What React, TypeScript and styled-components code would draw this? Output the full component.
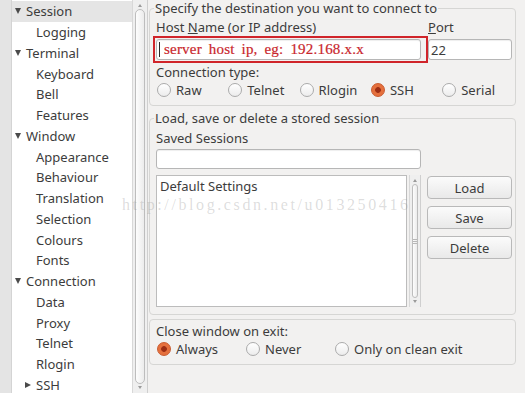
import styled, { createGlobalStyle } from "styled-components";

const GlobalStyle = createGlobalStyle`
    html, body {
        margin: 0;
        padding: 0;
        width: 525px;
        height: 393px;
        overflow: hidden;
        background: #f2f1f0;
        font-family: "Noto Sans", "Open Sans", sans-serif;
        font-size: 13px;
        color: #3c3c3c;
    }
    * { box-sizing: border-box; }
`;

const Window = styled.div`
    position: relative;
    display: flex;
    width: 525px;
    height: 393px;
    overflow: hidden;
`;

const Sidebar = styled.div`
    display: flex;
    width: 148px;
    flex-shrink: 0;
`;

const Strip = styled.div`
    width: 12px;
    background: #e4e4e4;
    border-right: 1px solid #d4d4d4;
`;

const Tree = styled.div`
    width: 120px;
    background: #ffffff;
    padding-top: 1px;
`;

const Row = styled.div<{ $level: number; $selected?: boolean }>`
    display: flex;
    align-items: center;
    height: 20.75px;
    padding-left: ${(p) => p.$level * 10 + 3}px;
    background: ${(p) => (p.$selected ? "#e5e5e5" : "transparent")};
    white-space: nowrap;
`;

const Expander = styled.span`
    width: 11px;
    display: flex;
    align-items: center;
`;

const Triangle = styled.span<{ $open: boolean }>`
    width: 0;
    height: 0;
    ${(p) =>
        p.$open
            ? `border-left: 3.5px solid transparent;
               border-right: 3.5px solid transparent;
               border-top: 6px solid #4a4a4a;`
            : `border-top: 3.5px solid transparent;
               border-bottom: 3.5px solid transparent;
               border-left: 6px solid #4a4a4a;`}
`;

const ScrollTrack = styled.div<{ $height?: number }>`
    display: flex;
    flex-direction: column;
    align-items: center;
    background: #efefef;
    border-left: 1px solid #d8d8d8;
    border-right: 1px solid #cfcfcf;
    width: ${(p) => (p.$height ? 12 : 16)}px;
    ${(p) => (p.$height ? `height: ${p.$height}px;` : "")}
`;

const Arrow = styled.span<{ $up: boolean }>`
    margin: ${(p) => (p.$up ? "4px 0 2px" : "2px 0 4px")};
    width: 0;
    height: 0;
    border-left: 2.5px solid transparent;
    border-right: 2.5px solid transparent;
    ${(p) => (p.$up ? "border-bottom: 3px solid #9a9a9a;" : "border-top: 3px solid #9a9a9a;")}
`;

const Thumb = styled.div`
    flex: 1;
    width: calc(100% - 4px);
    border: 1px solid #bdbdbd;
    border-radius: 5px;
    background: linear-gradient(to right, #fdfdfd, #ececec);
    display: flex;
    align-items: center;
    justify-content: center;
`;

const Grip = styled.span`
    width: 4px;
    height: 5px;
    border-top: 1px solid #b8b8b8;
    border-bottom: 1px solid #b8b8b8;
    position: relative;
    &::after {
        content: "";
        position: absolute;
        left: 0;
        right: 0;
        top: 1px;
        border-top: 1px solid #b8b8b8;
    }
`;

const Main = styled.div`
    flex: 1;
    padding: 0 9px 0 1px;
    display: flex;
    flex-direction: column;
    gap: 4px;
`;

const Group = styled.fieldset`
    margin: 0;
    min-width: 0;
    border: 1px solid #d6d6d4;
    border-radius: 4px;
    padding: 3px 3px 7px 6px;
`;

const Legend = styled.legend`
    padding: 0 1px;
    margin-left: -2px;
    line-height: 16px;
`;

const Label = styled.div<{ $gap?: number }>`
    line-height: 16px;
    white-space: nowrap;
    margin-top: ${(p) => p.$gap ?? 0}px;
`;

const HostGrid = styled.div`
    display: grid;
    grid-template-columns: 265px 84px;
    column-gap: 7px;
    row-gap: 4px;
`;

const Field = styled.div<{ $height: number }>`
    position: relative;
    height: ${(p) => p.$height}px;
    background: #ffffff;
    border: 1px solid #b6b6b6;
    border-radius: 3px;
    box-shadow: inset 0 1px 1px rgba(0, 0, 0, 0.07);
    display: flex;
    align-items: center;
    padding-left: 2px;
    white-space: nowrap;
`;

const Highlight = styled.span`
    position: absolute;
    inset: -4px -8px -4px -4px;
    border: 2px solid #d0242a;
    pointer-events: none;
`;

const Caret = styled.span`
    width: 1px;
    height: 15px;
    background: #2a2a2a;
    margin-right: 4px;
`;

const HintText = styled.span`
    font-family: "Liberation Serif", serif;
    font-size: 15px;
    color: #c9262c;
    word-spacing: 3px;
    letter-spacing: 0.2px;
    -webkit-text-stroke: 0.2px #c9262c;
`;

const RadioRow = styled.div<{ $cols: number; $col: number }>`
    display: grid;
    grid-template-columns: repeat(${(p) => p.$cols}, ${(p) => p.$col}px);
    margin-top: 2px;
`;

const RadioItem = styled.label<{ $span?: number }>`
    display: flex;
    align-items: center;
    gap: 5px;
    height: 16px;
    padding-left: 1px;
    white-space: nowrap;
    ${(p) => (p.$span ? `grid-column: span ${p.$span};` : "")}
`;

const RadioDot = styled.span<{ $checked?: boolean }>`
    width: 14px;
    height: 14px;
    border-radius: 50%;
    flex-shrink: 0;
    ${(p) =>
        p.$checked
            ? `background: radial-gradient(circle, #9c2e14 0 2.5px, #e5703d 3.2px);
               border: 1px solid #c95a2e;`
            : `background: linear-gradient(#ffffff, #ececec);
               border: 1px solid #ababab;`}
`;

const SessionGrid = styled.div`
    display: grid;
    grid-template-columns: 265px 85px;
    column-gap: 6px;
    margin-top: 3px;
`;

const ListArea = styled.div`
    display: flex;
    gap: 2px;
    margin-top: 6px;
`;

const ListBox = styled.div`
    flex: 1;
    height: 132px;
    background: #ffffff;
    border: 1px solid #bcbcbc;
    padding: 2px 3px;
    line-height: 16px;
`;

const Buttons = styled.div`
    display: flex;
    flex-direction: column;
    gap: 7px;
    margin-top: 7px;
`;

const Button = styled.button`
    height: 23px;
    border: 1px solid #b9b9b9;
    border-radius: 4px;
    background: linear-gradient(#fbfbfb, #e9e9e9);
    font-family: "Noto Sans", "Open Sans", sans-serif;
    font-size: 13px;
    color: #3c3c3c;
    padding: 0;
`;

const Watermark = styled.div`
    position: absolute;
    left: 122px;
    top: 196px;
    font-family: "Liberation Serif", serif;
    font-size: 16px;
    letter-spacing: 2.6px;
    color: rgba(150, 150, 150, 0.33);
    pointer-events: none;
    white-space: nowrap;
`;

type Node = { label: string; level: number; expander?: "open" | "closed"; selected?: boolean };

const nodes: Node[] = [
    { label: "Session", level: 0, expander: "open", selected: true },
    { label: "Logging", level: 1 },
    { label: "Terminal", level: 0, expander: "open" },
    { label: "Keyboard", level: 1 },
    { label: "Bell", level: 1 },
    { label: "Features", level: 1 },
    { label: "Window", level: 0, expander: "open" },
    { label: "Appearance", level: 1 },
    { label: "Behaviour", level: 1 },
    { label: "Translation", level: 1 },
    { label: "Selection", level: 1 },
    { label: "Colours", level: 1 },
    { label: "Fonts", level: 1 },
    { label: "Connection", level: 0, expander: "open" },
    { label: "Data", level: 1 },
    { label: "Proxy", level: 1 },
    { label: "Telnet", level: 1 },
    { label: "Rlogin", level: 1 },
    { label: "SSH", level: 1, expander: "closed" },
];

const protocols = ["Raw", "Telnet", "Rlogin", "SSH", "Serial"];

function Radio({ label, checked, span }: { label: string; checked?: boolean; span?: number }): JSX.Element {
    return (
        <RadioItem $span={span}>
            <RadioDot $checked={checked} />
            {label}
        </RadioItem>
    );
}

function App(): JSX.Element {
    return (
        <Window>
            <GlobalStyle />
            <Sidebar>
                <Strip />
                <Tree>
                    {nodes.map((n) => (
                        <Row key={n.label} $level={n.level} $selected={n.selected}>
                            <Expander>{n.expander && <Triangle $open={n.expander === "open"} />}</Expander>
                            {n.label}
                        </Row>
                    ))}
                </Tree>
                <ScrollTrack>
                    <Arrow $up />
                    <Thumb />
                    <Arrow $up={false} />
                </ScrollTrack>
            </Sidebar>
            <Main>
                <Group>
                    <Legend>Specify the destination you want to connect to</Legend>
                    <HostGrid>
                        <Label>
                            Host <u>N</u>ame (or IP address)
                        </Label>
                        <Label>
                            <u>P</u>ort
                        </Label>
                        <Field $height={21}>
                            <Caret />
                            <HintText>server host ip, eg: 192.168.x.x</HintText>
                            <Highlight />
                        </Field>
                        <Field $height={21}>22</Field>
                    </HostGrid>
                    <Label $gap={4}>Connection type:</Label>
                    <RadioRow $cols={5} $col={71.3}>
                        {protocols.map((p) => (
                            <Radio key={p} label={p} checked={p === "SSH"} />
                        ))}
                    </RadioRow>
                </Group>
                <Group>
                    <Legend>Load, save or delete a stored session</Legend>
                    <Label $gap={1}>Saved Sessions</Label>
                    <SessionGrid>
                        <Field $height={20} />
                        <div />
                        <ListArea>
                            <ListBox>Default Settings</ListBox>
                            <ScrollTrack $height={132}>
                                <Arrow $up />
                                <Thumb>
                                    <Grip />
                                </Thumb>
                                <Arrow $up={false} />
                            </ScrollTrack>
                        </ListArea>
                        <Buttons>
                            <Button>Load</Button>
                            <Button>Save</Button>
                            <Button>Delete</Button>
                        </Buttons>
                    </SessionGrid>
                </Group>
                <Group>
                    <Label>Close window on exit:</Label>
                    <RadioRow $cols={4} $col={89}>
                        <Radio label="Always" checked />
                        <Radio label="Never" />
                        <Radio label="Only on clean exit" span={2} />
                    </RadioRow>
                </Group>
            </Main>
            <Watermark>http://blog.csdn.net/u013250416</Watermark>
        </Window>
    );
}

export default App;
